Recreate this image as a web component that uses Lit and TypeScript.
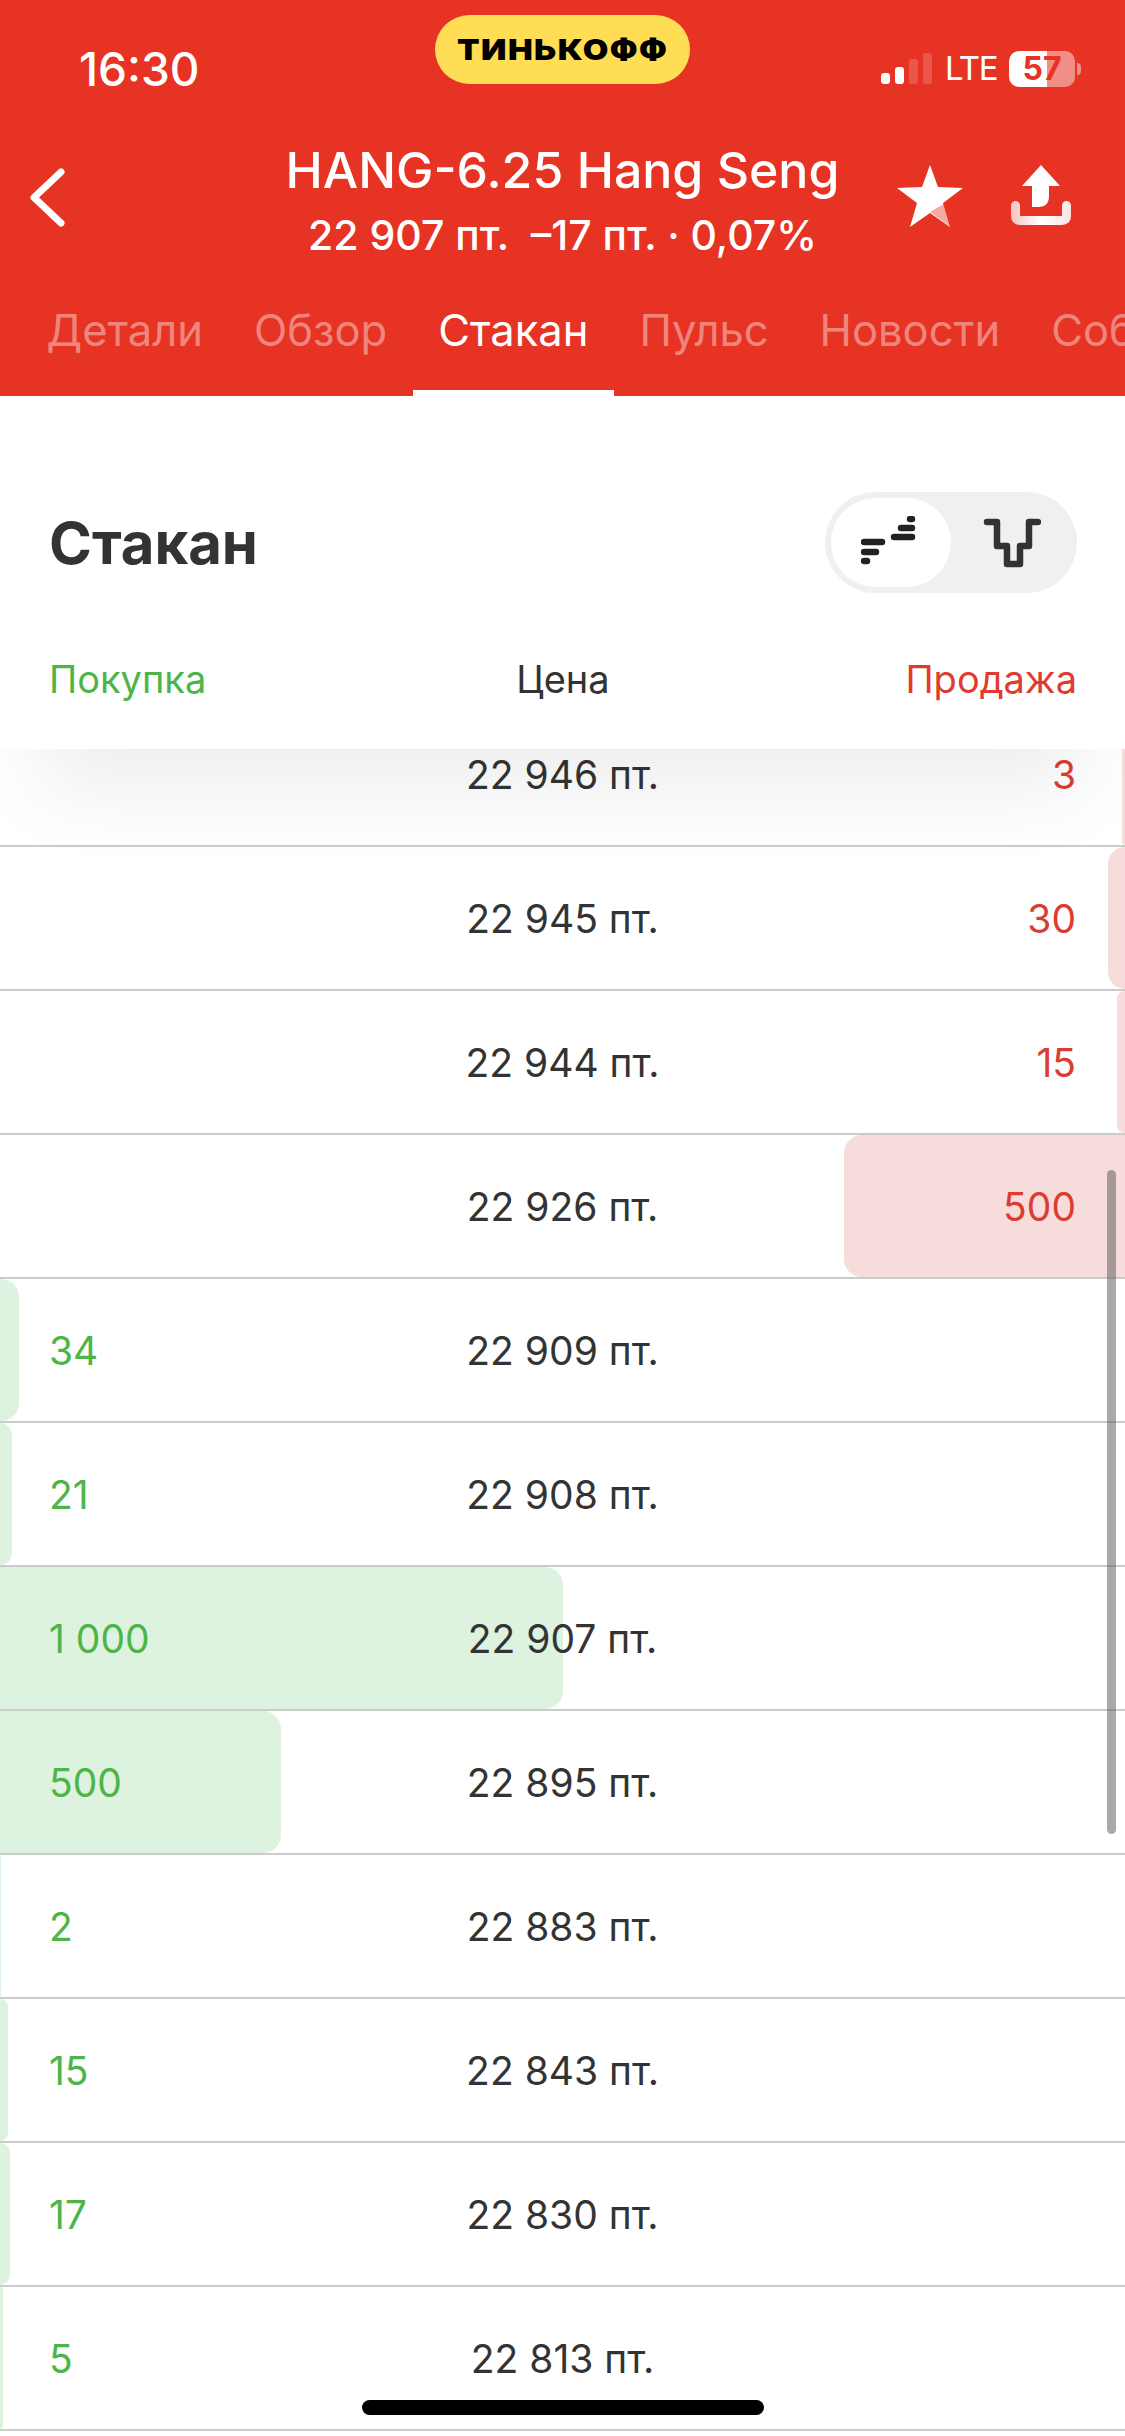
import { LitElement, html, css, svg } from 'lit';
import { customElement } from 'lit/decorators.js';

type Row = { price: string; qty: string; side: 'buy' | 'sell'; bar: number };

const ROWS: Row[] = [
  { price: '22 946 пт.', qty: '3', side: 'sell', bar: 3 },
  { price: '22 945 пт.', qty: '30', side: 'sell', bar: 17 },
  { price: '22 944 пт.', qty: '15', side: 'sell', bar: 8 },
  { price: '22 926 пт.', qty: '500', side: 'sell', bar: 281 },
  { price: '22 909 пт.', qty: '34', side: 'buy', bar: 19 },
  { price: '22 908 пт.', qty: '21', side: 'buy', bar: 12 },
  { price: '22 907 пт.', qty: '1 000', side: 'buy', bar: 563 },
  { price: '22 895 пт.', qty: '500', side: 'buy', bar: 281 },
  { price: '22 883 пт.', qty: '2', side: 'buy', bar: 1 },
  { price: '22 843 пт.', qty: '15', side: 'buy', bar: 8 },
  { price: '22 830 пт.', qty: '17', side: 'buy', bar: 10 },
  { price: '22 813 пт.', qty: '5', side: 'buy', bar: 3 },
];

const TABS = ['Детали', 'Обзор', 'Стакан', 'Пульс', 'Новости', 'События'];

const backIcon = svg`<svg width="35" height="59" viewBox="0 0 35 59" fill="none"><path d="M31 4 L4 29.5 L31 55" stroke="#fff" stroke-width="7" stroke-linecap="round" stroke-linejoin="round"/></svg>`;

const starIcon = svg`<svg width="66" height="62" viewBox="0 0 66 62">
  <path d="M33 0 L41 22 L66 23 L46 38 L53 62 L33 48 L13 62 L20 38 L0 23 L25 22 Z" fill="#fff"/>
  <path d="M33 47 L47 39 L54 62 Z" fill="#E63323" fill-opacity=".42"/>
</svg>`;

const shareIcon = svg`<svg width="60" height="60" viewBox="0 0 60 60" fill="none">
  <defs><linearGradient id="tray" gradientUnits="userSpaceOnUse" x1="0" y1="0" x2="60" y2="0">
    <stop offset="0" stop-color="#F3C4C0"/><stop offset=".5" stop-color="#fff"/><stop offset="1" stop-color="#FBE4E2"/>
  </linearGradient></defs>
  <path d="M30 0 L49 21 H38 V31 Q38 42 27 42 H21 V21 H11 Z" fill="#fff"/>
  <path d="M4.5 40.5 V51 Q4.5 55.5 9 55.5 H51 Q55.5 55.5 55.5 51 V40.5" stroke="url(#tray)" stroke-width="9" stroke-linecap="round" stroke-linejoin="round"/>
</svg>`;

const depthIcon = svg`<svg width="60" height="54" viewBox="0 0 60 54" fill="none" stroke="#222" stroke-width="6.5" stroke-linecap="round">
  <path d="M3 26 H21 M3 36 H15 M3 45 H6 M49 3 H51 M40 12 H51 M33 21 H51"/>
</svg>`;

const funnelIcon = svg`<svg width="60" height="52" viewBox="0 0 60 52" fill="none" stroke="#333" stroke-width="6.5" stroke-linecap="round" stroke-linejoin="round">
  <path d="M6 5 H16 V29 H26 V47 H39 V29 H48 V5 H57"/>
</svg>`;

@customElement('app-root')
export class AppRoot extends LitElement {
  static styles = css`
    :host {
      display: block;
      width: 1125px;
      height: 2436px;
      font-family: Inter, 'Noto Sans', sans-serif;
      color: #333;
    }

    .screen {
      position: relative;
      display: flex;
      flex-direction: column;
      height: 100%;
      overflow: hidden;
      background: #fff;
    }

    /* red header */
    .top {
      background: #e63323;
      color: #fff;
      height: 396px;
      flex: none;
      overflow: hidden;
    }

    .status {
      display: grid;
      grid-template-columns: 435px 255px 1fr;
      height: 135px;
      align-items: start;
    }

    .time {
      font-size: 46px;
      font-weight: 500;
      line-height: 50px;
      padding: 44px 0 0 79px;
    }

    .pill {
      margin-top: 15px;
      height: 69px;
      border-radius: 35px;
      background: #ffdd55;
      color: #000;
      display: flex;
      align-items: center;
      justify-content: center;
    }

    .pill span {
      display: inline-block;
      font-size: 29px;
      font-weight: 900;
      letter-spacing: 1.2px;
      transform: scaleX(1.14);
    }

    .indicators {
      display: flex;
      align-items: flex-end;
      justify-content: flex-end;
      height: 87px;
      padding-right: 50px;
    }

    .signal {
      display: flex;
      align-items: flex-end;
      gap: 5px;
      margin-right: 13px;
      height: 31px;
      margin-bottom: 3px;
    }

    .signal i {
      width: 9px;
      border-radius: 3px;
      background: #fff;
    }

    .signal i.off {
      background: rgba(255, 255, 255, 0.18);
    }

    .lte {
      font-size: 33px;
      line-height: 33px;
      letter-spacing: -1.5px;
      margin-right: 12px;
      margin-bottom: 2px;
    }

    .battery {
      width: 66px;
      height: 36px;
      border-radius: 10px;
      background: linear-gradient(90deg, #fff 57%, rgba(255, 255, 255, 0.45) 57%);
      color: #e63323;
      font-size: 32px;
      font-weight: 700;
      line-height: 36px;
      text-align: center;
      position: relative;
    }

    .battery::after {
      content: '';
      position: absolute;
      left: 68px;
      top: 12px;
      width: 4px;
      height: 12px;
      border-radius: 0 6px 6px 0;
      background: rgba(255, 255, 255, 0.45);
    }

    .nav {
      display: grid;
      grid-template-columns: 1fr auto 1fr;
      height: 130px;
    }

    .back {
      padding: 33px 0 0 30px;
    }

    .titles {
      text-align: center;
    }

    .name {
      font-size: 50px;
      font-weight: 500;
      line-height: 70px;
      white-space: nowrap;
    }

    .quote {
      font-size: 41px;
      font-weight: 500;
      line-height: 60px;
      white-space: pre;
    }

    .actions {
      display: flex;
      justify-content: flex-end;
      align-items: flex-start;
      gap: 48px;
      padding: 30px 54px 0 0;
    }

    .tabs {
      display: flex;
      padding-left: 21px;
      height: 131px;
      align-items: flex-end;
      white-space: nowrap;
    }

    .tab {
      flex: none;
      font-size: 43.5px;
      line-height: 60px;
      padding: 35px 25.5px 30px;
      border-bottom: 6px solid transparent;
      color: rgba(255, 255, 255, 0.42);
    }

    .tab.active {
      color: #fff;
      border-bottom-color: #fff;
    }

    /* sticky sheet with the title and the column names */
    .sheet {
      position: relative;
      z-index: 1;
      flex: none;
      height: 353px;
      box-sizing: border-box;
      padding: 96px 48px 0 49px;
      background: #fff;
      box-shadow: 0 81px 80px -40px rgba(0, 0, 0, 0.07);
    }

    .head {
      display: flex;
      justify-content: space-between;
      align-items: center;
    }

    h1 {
      margin: 0;
      font-size: 58px;
      font-weight: 700;
      color: #333;
    }

    .toggle {
      display: flex;
      align-items: center;
      width: 252px;
      height: 101px;
      box-sizing: border-box;
      padding: 6px;
      border-radius: 51px;
      background: #eff1f1;
    }

    .toggle .on {
      width: 120px;
      height: 89px;
      border-radius: 45px;
      background: #fff;
      display: flex;
      align-items: center;
      justify-content: center;
      flex: none;
    }

    .toggle .off {
      flex: 1;
      display: flex;
      justify-content: center;
    }

    .columns {
      display: grid;
      grid-template-columns: 1fr auto 1fr;
      margin-top: 61px;
      font-size: 38px;
      line-height: 50px;
    }

    .buy {
      color: #4db548;
    }

    .sell {
      color: #dc3d30;
      text-align: right;
    }

    /* order book */
    .clip {
      flex: 1;
      min-height: 0;
      overflow: hidden;
    }

    .book {
      margin-top: -46px;
    }

    .row {
      position: relative;
      display: grid;
      grid-template-columns: 1fr auto 1fr;
      align-items: center;
      height: 144px;
      box-sizing: border-box;
      padding: 0 49px;
      border-bottom: 2px solid #cbcbcb;
      font-size: 39px;
    }

    .row span {
      position: relative;
    }

    .bar {
      position: absolute;
      top: 0;
      bottom: 0;
    }

    .bar.buy {
      left: 0;
      background: #def2e0;
      border-radius: 0 18px 18px 0;
    }

    .bar.sell {
      right: 0;
      background: #f7dcdc;
      border-radius: 18px 0 0 18px;
    }

    .price {
      color: #333;
    }

    .scroll {
      position: absolute;
      z-index: 2;
      left: 1107px;
      top: 1170px;
      width: 9px;
      height: 664px;
      border-radius: 5px;
      background: rgba(90, 90, 90, 0.52);
    }

    .home {
      position: absolute;
      z-index: 2;
      left: 362px;
      top: 2400px;
      width: 402px;
      height: 15px;
      border-radius: 8px;
      background: #000;
    }
  `;

  renderRow(r: Row) {
    return html`
      <div class="row">
        <div class="bar ${r.side}" style="width:${r.bar}px"></div>
        <span class="buy">${r.side === 'buy' ? r.qty : ''}</span>
        <span class="price">${r.price}</span>
        <span class="sell">${r.side === 'sell' ? r.qty : ''}</span>
      </div>
    `;
  }

  render() {
    return html`
      <div class="screen">
        <header class="top">
          <div class="status">
            <div class="time">16:30</div>
            <div class="pill"><span>ТИНЬКОФФ</span></div>
            <div class="indicators">
              <div class="signal">
                <i style="height:11px"></i><i style="height:17px"></i>
                <i class="off" style="height:25px"></i><i class="off" style="height:31px"></i>
              </div>
              <div class="lte">LTE</div>
              <div class="battery">57</div>
            </div>
          </div>
          <div class="nav">
            <div class="back">${backIcon}</div>
            <div class="titles">
              <div class="name">HANG-6.25 Hang Seng</div>
              <div class="quote">22 907 пт.  –17 пт. · 0,07%</div>
            </div>
            <div class="actions">${starIcon}${shareIcon}</div>
          </div>
          <nav class="tabs">
            ${TABS.map((t) => html`<div class="tab ${t === 'Стакан' ? 'active' : ''}">${t}</div>`)}
          </nav>
        </header>

        <section class="sheet">
          <div class="head">
            <h1>Стакан</h1>
            <div class="toggle">
              <div class="on">${depthIcon}</div>
              <div class="off">${funnelIcon}</div>
            </div>
          </div>
          <div class="columns">
            <span class="buy">Покупка</span>
            <span class="price">Цена</span>
            <span class="sell">Продажа</span>
          </div>
        </section>

        <div class="clip">
          <div class="book">${ROWS.map((r) => this.renderRow(r))}</div>
        </div>

        <div class="scroll"></div>
        <div class="home"></div>
      </div>
    `;
  }
}
